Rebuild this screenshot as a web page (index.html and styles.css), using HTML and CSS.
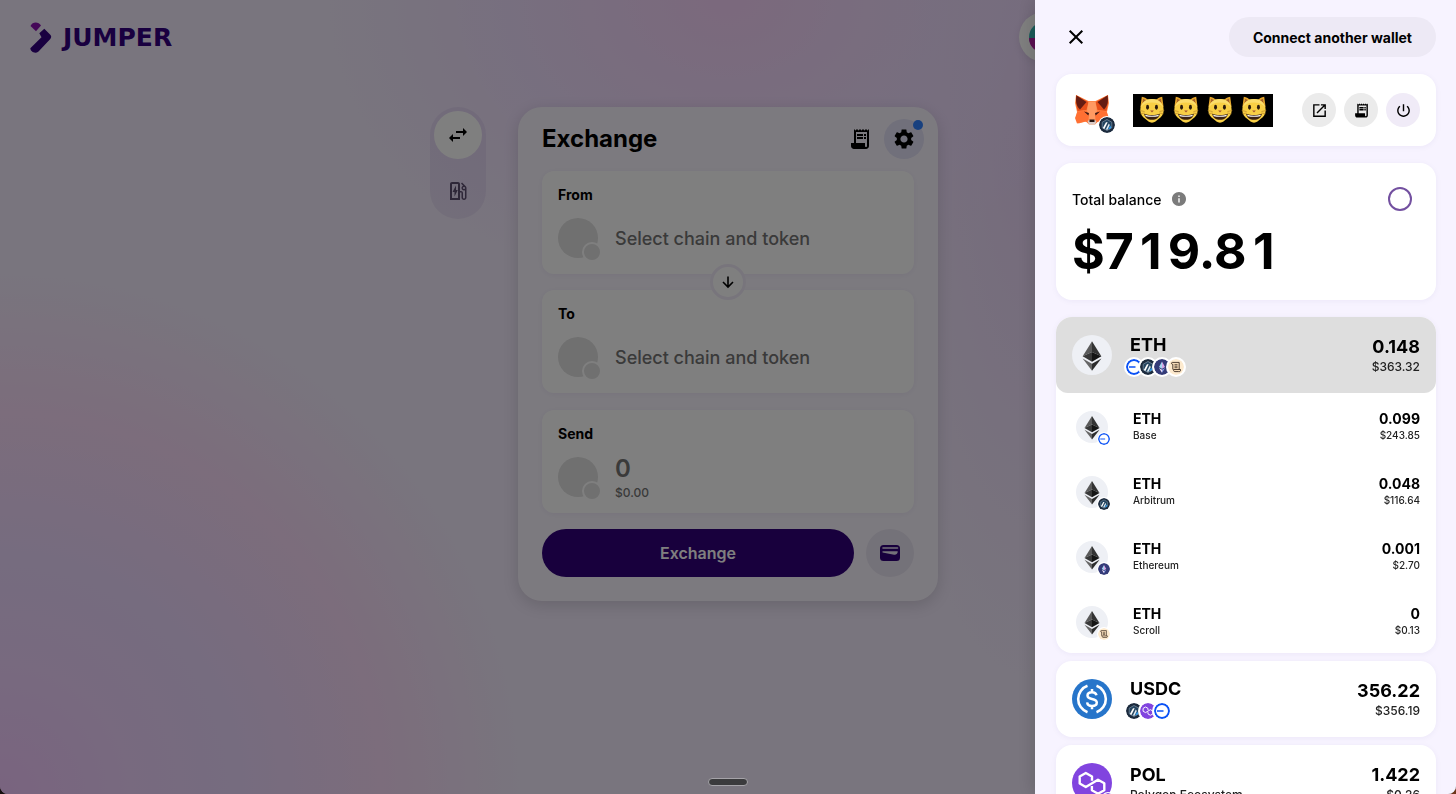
FILE: index.html
```html
<!DOCTYPE html>
<html lang="en">
<head>
<meta charset="utf-8">
<title>Jumper Exchange</title>
<meta name="viewport" content="width=device-width, initial-scale=1">
<link rel="stylesheet" href="styles.css">
</head>
<body>
<svg class="sprite" aria-hidden="true">
  <symbol id="eth-mark" viewBox="0 0 32 32">
    <circle cx="16" cy="16" r="16" fill="#eef0f5"/>
    <path d="M16 5 8.5 17 16 13.6z" fill="#5a5a5a"/><path d="M16 5v8.6l7.5 3.4z" fill="#333"/>
    <path d="M8.5 17 16 13.6v7.7z" fill="#383838"/><path d="M23.500 17 16 13.600v7.700z" fill="#151515"/>
    <path d="M8.500 18.700 16 22.900V28.500z" fill="#666"/><path d="M23.500 18.700 16 22.900V28.500z" fill="#2c2c2c"/>
  </symbol>
  <symbol id="base" viewBox="0 0 16 16">
    <circle cx="8" cy="8" r="7" fill="#fff" stroke="#0b52f5" stroke-width="2"/>
    <path d="M3 8h6.500" stroke="#0b52f5" stroke-width="1.300"/>
  </symbol>
  <symbol id="arbitrum" viewBox="0 0 16 16">
    <circle cx="8" cy="8" r="8" fill="#1b2a3d"/>
    <path d="M8 2.500 12.800 5.200v5.600L8 13.500 3.200 10.800V5.200z" fill="#24445f" stroke="#7f97ab" stroke-width=".7"/>
    <path d="M3.800 11 7 5.200h1.700L5.400 12z" fill="#fff"/><path d="M6.800 12.400 9.800 6.500l1 1.500-2.300 4.800z" fill="#dceaf4"/>
    <path d="m9.500 11.800 1.700-3.200 1.200 2.200-2.400 1.800z" fill="#2f9df0"/>
  </symbol>
  <symbol id="ethereum" viewBox="0 0 16 16">
    <circle cx="8" cy="8" r="8" fill="#343b78"/>
    <path d="M8 2.500 5 8l3 1.700z" fill="#a5d8ef"/><path d="m8 2.500 3 5.500-3 1.700z" fill="#d9a8e4"/>
    <path d="m5 9 3 1.800v2.900z" fill="#f1e1f7"/><path d="m11 9-3 1.800v2.900z" fill="#8fa5ea"/>
  </symbol>
  <symbol id="scroll" viewBox="0 0 16 16">
    <circle cx="8" cy="8" r="8" fill="#fdeace"/>
    <path d="M4.800 10.500V5.300c-1.500.3-2-1.900-.3-1.900h6.700v7.100M5.500 10.500h7c.4 2-1 2.300-1.800 2.100H6.800c-1 0-1.300-.8-1.300-2.100z" fill="#f7dcb8" stroke="#3b2d22" stroke-width=".9"/>
    <path d="M6.500 5.700h3M6.500 7.200h3M6.500 8.700h3" stroke="#3b2d22" stroke-width=".8"/>
  </symbol>
  <symbol id="polygon" viewBox="0 0 40 40">
    <circle cx="20" cy="20" r="20" fill="#8144df"/>
    <g fill="none" stroke="#fff" stroke-width="2.400" stroke-linejoin="round"><path d="M20 17.800V13.500L13.800 10 7.700 13.500v7L13.800 24 26 16.700l6.300 3.500v7L26 30.700l-6.100-3.500v-4.300"/></g>
  </symbol>
  <symbol id="usdc" viewBox="0 0 40 40">
    <circle cx="20" cy="20" r="20" fill="#2775ca"/>
    <path d="M15.500 6.800a14 14 0 0 0 0 26.400M24.500 6.800a14 14 0 0 1 0 26.400" fill="none" stroke="#fff" stroke-width="2.600"/>
    <path d="M24.500 16.300c-.5-2.100-2-3.100-4.500-3.100-2.700 0-4.500 1.300-4.500 3.300 0 2.200 1.900 2.900 4.500 3.400s4.800 1.200 4.800 3.600c0 2.200-1.900 3.500-4.800 3.500s-4.600-1.300-4.900-3.600M20 10v3.500M20 26.700v3.500" fill="none" stroke="#fff" stroke-width="2.500"/>
  </symbol>
  <symbol id="cat" viewBox="0 0 28 30">
    <path d="M1.500 12 3 .8c3 .6 5.500 2 7.500 4h7c2-2 4.500-3.400 7.500-4L26.500 12z" fill="#e5a62c"/>
    <path d="m3.800 8 .6-5c1.800.7 3 1.500 4.200 2.600zM24.200 8l-.6-5c-1.800.7-3 1.500-4.200 2.600z" fill="#a8642a"/>
    <path d="M14 3.200c8 0 12.600 5.300 12.600 12.300 0 4-2.600 7-5.600 9.300-2.300 1.800-4 4-7 4s-4.700-2.200-7-4C4 22.500 1.400 19.500 1.400 15.500 1.400 8.500 6 3.200 14 3.200z" fill="#f8cf45"/>
    <path d="M14 3.200c6.500 0 10.600 3.500 12 8.600-3-3.500-7-5-12-5s-9 1.500-12 5c1.400-5.100 5.500-8.600 12-8.600z" fill="#fbdd6c"/>
    <ellipse cx="9.200" cy="12" rx="1.600" ry="2.600" fill="#2a1a0c"/><ellipse cx="18.800" cy="12" rx="1.600" ry="2.600" fill="#2a1a0c"/>
    <path d="M12 15.500h4l-2 2.200z" fill="#a2532e"/>
    <path d="M5.500 19c5 1.800 12 1.800 17 0-.8 4.200-4 6.600-8.500 6.600S6.300 23.200 5.500 19z" fill="#3b2211"/>
    <path d="M6.500 20.200c4.700 1.300 10.300 1.300 15 0l-.8 1.400c-4 .8-9.400.8-13.400 0z" fill="#fff"/>
    <path d="M.8 15.500 6 16.700M1.500 19 6 18.300M27.200 15.500 22 16.700M26.500 19l-4.500-.7" stroke="#b8842a" stroke-width=".7"/>
  </symbol>
  <symbol id="receipt" viewBox="0 0 24 24">
    <path d="M19.500 3.500 18 2l-1.500 1.500L15 2l-1.500 1.500L12 2l-1.500 1.500L9 2 7.500 3.500 6 2v14H3v3c0 1.660 1.340 3 3 3h12c1.660 0 3-1.340 3-3V2zM19 19c0 .55-.45 1-1 1s-1-.45-1-1v-3H8V5h11z"/>
    <path d="M9 7h6v2H9zm7 0h2v2h-2zm-7 3h6v2H9zm7 0h2v2h-2zM5 17h11v4H5z"/>
  </symbol>
</svg>

<div class="app">
  <header class="topbar">
    <a class="brand" href="#" aria-label="Jumper">
      <svg width="146" height="32" viewBox="0 0 146 32">
        <path d="M1.500 5C3.500.5 9.500.5 12 4.500L7 10.300z" fill="#8b10b0"/>
        <path d="M10.300 12.300 15.300 7.700l6 6c1.200 1.200 1.200 3 0 4.200L9.500 30.500C6 33.500 1.500 30.500 1.300 27.300L12.500 16.300z" fill="#330080"/>
        <text class="wordmark" x="34" y="25">JUMPER</text>
      </svg>
    </a>
    <button class="account" type="button" aria-label="Account">
      <svg width="30" height="30" viewBox="0 0 30 30"><circle cx="15" cy="15" r="15" fill="#36b8b4"/><path d="M0 16h30a15 15 0 0 1-30 0z" fill="#b81fa8"/></svg>
    </button>
  </header>

  <main class="stage">
    <nav class="modes" aria-label="Mode">
      <button class="mode mode-on" type="button" aria-label="Exchange">
        <svg width="24" height="24" viewBox="0 0 24 24"><path d="M6.990 11 3 15l3.990 4v-3H14v-2H6.990zM21 9l-3.990-4v3H10v2h7.010v3z"/></svg>
      </button>
      <button class="mode" type="button" aria-label="Gas">
        <svg width="24" height="24" viewBox="0 0 24 24" fill="#5d4f70"><path d="m19.770 7.230.01-.01-3.720-3.720L15 4.560l2.110 2.110c-.94.36-1.610 1.260-1.610 2.330 0 1.380 1.120 2.500 2.500 2.500.36 0 .69-.08 1-.21v7.210c0 .55-.45 1-1 1s-1-.45-1-1V14c0-1.100-.9-2-2-2h-1V5c0-1.100-.9-2-2-2H6c-1.100 0-2 .9-2 2v16h10v-7.500h1.500v5c0 1.380 1.120 2.500 2.500 2.500s2.500-1.120 2.500-2.500V9c0-.69-.28-1.320-.73-1.770zM18 10c-.55 0-1-.45-1-1s.45-1 1-1 1 .45 1 1-.45 1-1 1zm-6 9H6V5h6z"/><path d="M8.500 17.500V13h-2l3.500-6.500V11h1.800z"/></svg>
      </button>
    </nav>

    <section class="widget">
      <div class="widget-head">
        <h1 class="widget-title">Exchange</h1>
        <div class="widget-tools">
          <button class="tool" type="button" aria-label="History"><svg width="24" height="24"><use href="#receipt"/></svg></button>
          <button class="tool tool-on" type="button" aria-label="Settings">
            <svg width="24" height="24" viewBox="0 0 24 24"><path d="M19.140 12.940c.04-.3.06-.61.06-.94 0-.32-.02-.64-.07-.94l2.030-1.580c.18-.14.23-.41.12-.61l-1.920-3.320c-.12-.22-.37-.29-.59-.22l-2.390.96c-.5-.38-1.030-.7-1.620-.94l-.36-2.540c-.04-.24-.24-.41-.48-.41h-3.840c-.24 0-.43.17-.47.41l-.36 2.540c-.59.24-1.130.57-1.620.94l-2.390-.96c-.22-.08-.47 0-.59.22L2.740 8.870c-.12.21-.08.47.12.61l2.030 1.580c-.05.3-.09.63-.09.94s.02.64.07.94l-2.030 1.580c-.18.14-.23.41-.12.61l1.920 3.320c.12.22.37.29.59.22l2.390-.96c.5.38 1.030.7 1.620.94l.36 2.540c.05.24.24.41.48.41h3.840c.24 0 .44-.17.47-.41l.36-2.540c.59-.24 1.130-.56 1.620-.94l2.390.96c.22.08.47 0 .59-.22l1.920-3.320c.12-.22.07-.47-.12-.61zM12 15.600c-1.980 0-3.600-1.620-3.600-3.600s1.620-3.600 3.600-3.600 3.600 1.620 3.600 3.600-1.620 3.600-3.600 3.600z"/></svg>
            <span class="tool-dot"></span>
          </button>
        </div>
      </div>

      <button class="field" type="button">
        <span class="field-label">From</span>
        <span class="field-row"><span class="blank"></span><span class="placeholder">Select chain and token</span></span>
      </button>
      <div class="swap-slot">
        <button class="swap" type="button" aria-label="Swap direction"><svg width="16" height="16" viewBox="0 0 16 16" fill="none" stroke="#000" stroke-width="1.600"><path d="M8 2.500v10.200M3 8l5 5 5-5"/></svg></button>
      </div>
      <button class="field" type="button">
        <span class="field-label">To</span>
        <span class="field-row"><span class="blank"></span><span class="placeholder">Select chain and token</span></span>
      </button>
      <div class="field field-send">
        <label class="field-label" for="amount">Send</label>
        <div class="field-row"><span class="blank"></span>
          <div class="amount-box"><input class="amount" id="amount" type="text" placeholder="0"><span class="amount-usd">$0.00</span></div>
        </div>
      </div>
      <div class="widget-actions">
        <button class="submit" type="button">Exchange</button>
        <button class="to-wallet" type="button" aria-label="Send to wallet">
          <svg width="20" height="16" viewBox="0 0 20 16"><rect width="20" height="16" rx="3.500" fill="#31007a"/><path d="M3 3h14.500" stroke="#e9e4f2" stroke-width="1.600" stroke-linecap="round"/><path d="M2.500 6.200h15.200c.2 2.200-1.500 4-3.600 3.600L2.500 7.600z" fill="#e9e4f2"/></svg>
        </button>
      </div>
    </section>
  </main>
</div>
<div class="backdrop"></div>
<div class="handle"></div>

<aside class="drawer" aria-label="Wallet">
  <div class="drawer-head">
    <button class="close" type="button" aria-label="Close"><svg width="24" height="24" viewBox="0 0 24 24" fill="none" stroke="#000" stroke-width="2"><path d="m5.700 5.700 12.600 12.600M18.300 5.700 5.700 18.300"/></svg></button>
    <button class="connect" type="button">Connect another wallet</button>
  </div>

  <section class="panel wallet">
    <div class="wallet-icon">
      <svg width="34" height="32" viewBox="0 0 34 32">
        <path d="m1 1 12.500 6h7L33 1l1 8-2 9 1 5-2.500 6.500-7.500-2-3 3h-6l-3-3-7.500 2L1 23l1-5L0 9z" fill="#ff8a4b"/>
        <path d="m1 1 12.500 7-2 8L2.500 17 1 9zM33 1 20.500 8l2 8 9 1L33 9z" fill="#e8501a"/>
        <path d="m1.500 1.500 10 6.500-6.500 7.500c-4-3.500-4.500-9-3.500-14zM32.500 1.500l-10 6.500 6.500 7.500c4-3.500 4.500-9 3.500-14z" fill="#651c12"/>
        <path d="M13.500 8h7l1.500 11-2 8h-6l-2-8z" fill="#ff9a62"/>
        <path d="m2.500 17.500 9-1 2.500 5-1 7-3-1-8 2L0 24zM31.500 17.500l-9-1-2.500 5 1 7 3-1 8 2L34 24z" fill="#ff7033"/>
        <path d="m9 17.500 5 1.500-.6 2.400zM25 17.500l-5 1.500.6 2.400z" fill="#3b1714"/>
        <path d="m12.500 27 2-1h5l2 1-1.500 3.500h-6z" fill="#d9c9c5"/><path d="M14.500 25.500h5V28h-5z" fill="#24120f"/>
      </svg>
      <svg class="wallet-chain" width="18" height="18"><use href="#arbitrum"/></svg>
    </div>
    <div class="wallet-name" role="img" aria-label="Wallet address hidden">
      <svg width="26" height="28"><use href="#cat"/></svg><svg width="26" height="28"><use href="#cat"/></svg><svg width="26" height="28"><use href="#cat"/></svg><svg width="26" height="28"><use href="#cat"/></svg>
    </div>
    <div class="wallet-tools">
      <button class="round" type="button" aria-label="Open in explorer"><svg width="17" height="17" viewBox="0 0 24 24"><path d="M19 19H5V5h7V3H3v18h18v-9h-2zM14 3v2h3.590l-9.830 9.830 1.410 1.410L19 6.410V10h2V3z"/></svg></button>
      <button class="round" type="button" aria-label="Transactions"><svg width="17" height="17"><use href="#receipt"/></svg></button>
      <button class="round round-tint" type="button" aria-label="Disconnect"><svg width="17" height="17" viewBox="0 0 24 24"><path d="M13 3h-2v10h2zm4.830 2.170-1.420 1.420C17.990 7.860 19 9.810 19 12c0 3.870-3.130 7-7 7s-7-3.130-7-7c0-2.190 1.010-4.140 2.580-5.420L6.170 5.170C4.230 6.820 3 9.260 3 12c0 4.970 4.030 9 9 9s9-4.030 9-9c0-2.740-1.230-5.180-3.170-6.830z"/></svg></button>
    </div>
  </section>

  <section class="panel balance">
    <div class="balance-head">
      <span class="balance-label">Total balance</span>
      <svg width="16" height="16" viewBox="2 2 20 20" fill="#7b7b7b"><path d="M12 2C6.480 2 2 6.480 2 12s4.480 10 10 10 10-4.480 10-10S17.520 2 12 2zm1 15h-2v-6h2zm0-8h-2V7h2z"/></svg>
      <button class="refresh" type="button" aria-label="Refresh"><span class="ring"></span></button>
    </div>
    <div class="balance-value">$7<span class="digit">1</span>9.8<span class="digit">1</span></div>
  </section>

  <div class="tokens">
    <section class="panel group">
      <div class="token token-open">
        <svg width="40" height="40"><use href="#eth-mark"/></svg>
        <div class="token-main"><span class="token-name">ETH</span>
          <span class="chips"><svg class="chip"><use href="#base"/></svg><svg class="chip"><use href="#arbitrum"/></svg><svg class="chip"><use href="#ethereum"/></svg><svg class="chip"><use href="#scroll"/></svg></span></div>
        <div class="token-sum"><span class="token-name">0.148</span><span class="token-note">$363.32</span></div>
      </div>
      <div class="sub">
        <div class="sub-icon"><svg width="32" height="32"><use href="#eth-mark"/></svg><svg class="sub-chain"><use href="#base"/></svg></div>
        <div class="token-main"><span class="sub-name">ETH</span><span class="sub-note">Base</span></div>
        <div class="token-sum"><span class="sub-name">0.099</span><span class="sub-note">$243.85</span></div>
      </div>
      <div class="sub">
        <div class="sub-icon"><svg width="32" height="32"><use href="#eth-mark"/></svg><svg class="sub-chain"><use href="#arbitrum"/></svg></div>
        <div class="token-main"><span class="sub-name">ETH</span><span class="sub-note">Arbitrum</span></div>
        <div class="token-sum"><span class="sub-name">0.048</span><span class="sub-note">$116.64</span></div>
      </div>
      <div class="sub">
        <div class="sub-icon"><svg width="32" height="32"><use href="#eth-mark"/></svg><svg class="sub-chain"><use href="#ethereum"/></svg></div>
        <div class="token-main"><span class="sub-name">ETH</span><span class="sub-note">Ethereum</span></div>
        <div class="token-sum"><span class="sub-name">0.001</span><span class="sub-note">$2.70</span></div>
      </div>
      <div class="sub">
        <div class="sub-icon"><svg width="32" height="32"><use href="#eth-mark"/></svg><svg class="sub-chain"><use href="#scroll"/></svg></div>
        <div class="token-main"><span class="sub-name">ETH</span><span class="sub-note">Scroll</span></div>
        <div class="token-sum"><span class="sub-name">0</span><span class="sub-note">$0.13</span></div>
      </div>
    </section>
    <section class="panel token">
      <svg width="40" height="40"><use href="#usdc"/></svg>
      <div class="token-main"><span class="token-name">USDC</span>
        <span class="chips"><svg class="chip"><use href="#arbitrum"/></svg><svg class="chip"><use href="#polygon"/></svg><svg class="chip"><use href="#base"/></svg></span></div>
      <div class="token-sum"><span class="token-name">356.22</span><span class="token-note">$356.19</span></div>
    </section>
    <section class="panel token">
      <div class="sub-icon"><svg width="40" height="40"><use href="#polygon"/></svg><svg class="sub-chain"><use href="#polygon"/></svg></div>
      <div class="token-main"><span class="token-name">POL</span><span class="token-note">Polygon Ecosystem</span></div>
      <div class="token-sum"><span class="token-name">1.422</span><span class="token-note">$0.26</span></div>
    </section>
  </div>
</aside>
</body>
</html>
```

FILE: styles.css
```css
*, *::before, *::after { box-sizing: border-box; }

html { background: linear-gradient(90deg, #15100f 50%, #71381c 50%); }

body {
  margin: 0;
  height: 100vh;
  overflow: hidden;
  font-family: Inter, "Liberation Sans", sans-serif;
  color: #000;
}

button {
  padding: 0;
  border: 0;
  background: none;
  color: inherit;
  font: inherit;
}

svg { display: block; flex: none; }
.sprite { position: absolute; width: 0; height: 0; }

.app {
  min-height: 100vh;
  border-radius: 0 0 8px 8px;
  background:
    radial-gradient(circle 520px at 0 100%, #f3c8ff 0, #f0d4ff 130px, #ecd8ff 230px, #f8daf8 380px, rgba(244, 234, 255, 0) 520px),
    radial-gradient(ellipse 400px 300px at 50% 0, #f7d2fa 0, rgba(238, 218, 255, .7) 55%, rgba(244, 234, 255, 0) 100%),
    radial-gradient(ellipse 170px 560px at 71% 15%, #ead4f8 0, rgba(238, 226, 255, 0) 100%),
    #f2eafc;
}

.backdrop {
  position: fixed;
  inset: 0;
  border-radius: 0 0 8px 8px;
  background: rgba(0, 0, 0, .5);
}

.topbar {
  display: flex;
  align-items: center;
  justify-content: space-between;
  height: 74px;
  padding: 0 24px 0 29px;
}

.wordmark {
  font-family: "DejaVu Sans", sans-serif;
  font-size: 25px;
  font-weight: 700;
  fill: #330080;
}

.account {
  display: flex;
  align-items: center;
  width: 413px;
  height: 50px;
  padding-left: 10px;
  border-radius: 25px;
  background: #fff;
  box-shadow: 0 2px 8px rgba(0, 0, 0, .08);
}

.stage {
  display: grid;
  grid-template-columns: 1fr 420px 1fr;
  align-items: start;
  column-gap: 32px;
  padding-top: 33px;
}

.modes {
  display: grid;
  gap: 8px;
  justify-self: end;
  padding: 4px;
  border-radius: 28px;
  background: rgba(49, 0, 122, .06);
}

.mode {
  display: grid;
  place-items: center;
  width: 48px;
  height: 48px;
  border-radius: 50%;
}

.mode-on { background: #fff; }

.widget {
  padding: 12px 24px 24px;
  border-radius: 24px;
  background: #f9f5ff;
  box-shadow: 0 4px 16px rgba(0, 0, 0, .14);
}

.widget-head {
  display: flex;
  align-items: center;
  justify-content: space-between;
  margin-bottom: 12px;
}

.widget-title {
  margin: 0;
  font-size: 24px;
  font-weight: 700;
  line-height: 40px;
}

.widget-tools { display: flex; gap: 4px; margin-right: -10px; }

.tool {
  position: relative;
  display: grid;
  place-items: center;
  width: 40px;
  height: 40px;
  border-radius: 50%;
}

.tool-on { background: #e2e0f6; }

.tool-dot {
  position: absolute;
  top: 1px;
  right: 1px;
  width: 10px;
  height: 10px;
  border-radius: 50%;
  background: #3080ff;
}

.field {
  display: block;
  width: 100%;
  padding: 12px 16px 16px;
  border-radius: 12px;
  background: #fff;
  box-shadow: 0 1px 6px rgba(49, 0, 122, .06);
  text-align: left;
}

.field-label {
  display: block;
  font-size: 14px;
  font-weight: 700;
  line-height: 24px;
}

.field-row {
  display: flex;
  align-items: center;
  gap: 17px;
  height: 40px;
  margin-top: 11px;
}

.blank {
  position: relative;
  flex: none;
  width: 40px;
  height: 40px;
  border-radius: 50%;
  background: #e0e0e0;
}

.blank::after {
  content: "";
  position: absolute;
  right: -4px;
  bottom: -4px;
  width: 20px;
  height: 20px;
  border: 2px solid #fff;
  border-radius: 50%;
  background: #e0e0e0;
}

.placeholder { color: #747474; font-size: 18px; font-weight: 500; }

.swap-slot {
  position: relative;
  display: grid;
  place-items: center;
  height: 16px;
}

.swap {
  display: grid;
  place-items: center;
  width: 36px;
  height: 36px;
  margin: -10px 0;
  border: 3px solid #f1ebf9;
  border-radius: 50%;
  background: #fff;
}

.field-send { margin-top: 17px; }
.amount-box { display: grid; min-width: 0; padding-top: 3px; }

.amount {
  width: 100%;
  height: 28px;
  padding: 0;
  border: 0;
  outline: 0;
  background: none;
  font: 600 24px/28px Inter, sans-serif;
}

.amount::placeholder { color: #747474; opacity: 1; }
.amount-usd { color: #747474; font-size: 12px; font-weight: 500; line-height: 20px; }

.widget-actions { display: flex; gap: 12px; margin-top: 16px; }

.submit {
  flex: 1;
  height: 48px;
  border-radius: 24px;
  background: #31007a;
  color: #fff;
  font-size: 16px;
  font-weight: 600;
}

.to-wallet {
  display: grid;
  place-items: center;
  width: 48px;
  height: 48px;
  border-radius: 50%;
  background: #e9e4f2;
}

.handle {
  position: fixed;
  bottom: 8px;
  left: 50%;
  width: 40px;
  height: 8px;
  margin-left: -20px;
  border: 1px solid #a5a3a8;
  border-radius: 4px;
  background: #3b3b3d;
}

.drawer {
  position: fixed;
  top: 0;
  right: 0;
  bottom: 0;
  display: flex;
  flex-direction: column;
  gap: 17px;
  width: 421px;
  padding: 17px 20px 0 21px;
  overflow: hidden;
  border-radius: 0 0 8px 0;
  background: #f7f3ff;
  box-shadow: -4px 0 16px rgba(0, 0, 0, .12);
}

.drawer-head { display: flex; align-items: center; justify-content: space-between; }
.close { display: grid; place-items: center; width: 40px; height: 40px; }

.connect {
  height: 40px;
  padding: 0 24px;
  border-radius: 20px;
  background: #ede9f5;
  font-size: 14px;
  font-weight: 700;
}

.panel {
  flex: none;
  border-radius: 16px;
  background: #fff;
  box-shadow: 0 1px 6px rgba(49, 0, 122, .05);
}

.wallet { display: flex; align-items: center; padding: 16px; }

.wallet-icon {
  position: relative;
  display: grid;
  place-items: center;
  width: 40px;
  height: 40px;
}

.wallet-chain {
  position: absolute;
  right: -4px;
  bottom: -4px;
  padding: 1px;
  border-radius: 50%;
  background: #fff;
}

.wallet-name {
  display: flex;
  align-items: center;
  gap: 8px;
  height: 33px;
  margin-left: 21px;
  padding: 0 6px;
  background: #000;
}

.wallet-tools { display: flex; gap: 8px; margin-left: auto; }

.round {
  display: grid;
  place-items: center;
  width: 34px;
  height: 34px;
  border-radius: 50%;
  background: #ebebeb;
}

.round-tint { background: #f0ebf7; }

.balance { padding: 16px; }
.balance-head { display: flex; align-items: center; gap: 10px; }
.balance-label { font-size: 14px; font-weight: 500; }
.balance-head svg { width: 14px; height: 14px; }

.refresh {
  display: grid;
  place-items: center;
  width: 40px;
  height: 40px;
  margin-left: auto;
}

.ring { width: 24px; height: 24px; border: 2px solid #7350a0; border-radius: 50%; }

.balance-value {
  font-size: 50px;
  font-weight: 700;
  line-height: 65px;
}

.digit { display: inline-block; width: 34px; text-align: center; }

.tokens { display: grid; gap: 8px; }
.token { display: flex; align-items: center; height: 76px; padding: 0 16px; }
.token-open { border-radius: 16px 16px 12px 12px; background: #dedede; }
.token-main { display: grid; margin-left: 18px; }
.token-sum { display: grid; justify-items: end; margin-left: auto; }
.token-name { font-size: 18px; font-weight: 700; line-height: 24px; }
.token-note { font-size: 12px; font-weight: 500; line-height: 16px; color: #222; }

.chips { display: flex; align-items: center; height: 20px; margin-left: -6px; }

.chip {
  width: 20px;
  height: 20px;
  margin-right: -6px;
  padding: 2px;
  border-radius: 50%;
  background: #fff;
}

.sub { display: flex; align-items: center; height: 65px; padding: 2px 16px 0 20px; }
.sub .token-main { margin-left: 25px; }
.sub-icon { position: relative; }

.sub-chain {
  position: absolute;
  right: -3px;
  bottom: -3px;
  width: 14px;
  height: 14px;
  padding: 1px;
  border-radius: 50%;
  background: #fff;
}

.sub-name { font-size: 14px; font-weight: 700; line-height: 16px; }
.sub-note { font-size: 10px; font-weight: 500; line-height: 16px; color: #222; }
```
